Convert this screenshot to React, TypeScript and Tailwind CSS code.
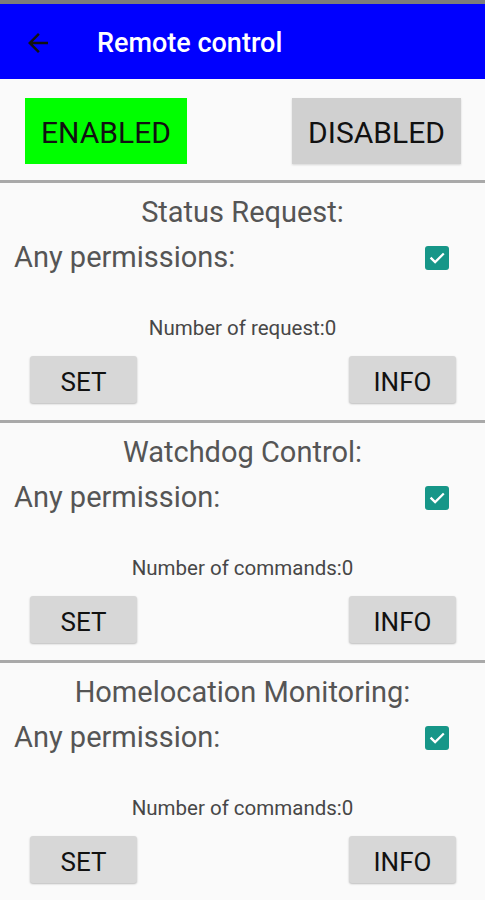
const sections = [
  { title: 'Status Request:', label: 'Any permissions:', count: 'Number of request:0' },
  { title: 'Watchdog Control:', label: 'Any permission:', count: 'Number of commands:0' },
  { title: 'Homelocation Monitoring:', label: 'Any permission:', count: 'Number of commands:0' },
];

const Checkbox = () => (
  <div className="w-[24px] h-[24px] rounded-[3px] bg-[#169688] flex items-center justify-center">
    <svg width="18" height="18" viewBox="0 0 24 24" fill="none">
      <path d="M4.5 12.5l5 5L20 7" stroke="#fff" strokeWidth="3" strokeLinecap="square" />
    </svg>
  </div>
);

const GrayButton = ({ children }: { children: string }) => (
  <button className="w-[107px] h-[47px] rounded-[3px] bg-[#d7d7d7] shadow-[0_1px_2px_rgba(0,0,0,0.25)] text-[26px] text-[#111] leading-[47px] pt-[3px]">
    {children}
  </button>
);

const Section = ({ title, label, count }: { title: string; label: string; count: string }) => (
  <div className="flex flex-col">
    <div className="h-[3px] bg-[#a9a9a9]" />
    <div className="mt-[12px] h-[34px] leading-[34px] text-center text-[29px] text-[#555]">{title}</div>
    <div className="mt-[11px] h-[34px] flex items-center justify-between pl-[14px] pr-[36px]">
      <span className="text-[29px] text-[#555] leading-[34px]">{label}</span>
      <div className="mt-[1px]">
        <Checkbox />
      </div>
    </div>
    <div className="mt-[42px] h-[24px] leading-[24px] text-center text-[20.5px] text-[#474747]">{count}</div>
    <div className="mt-[16px] flex justify-between pl-[30px] pr-[29px]">
      <GrayButton>SET</GrayButton>
      <GrayButton>INFO</GrayButton>
    </div>
    <div className="h-[17px]" />
  </div>
);

const App = () => {
  return (
    <div className="w-[485px] h-[900px] overflow-hidden bg-[#fafafa] font-['Roboto',_'Noto_Sans',_sans-serif]">
      <div className="h-[4px] bg-[#7d7d7d]" />
      <div className="h-[75px] bg-[#0000ff] flex items-center pl-[23px]">
        <svg width="30" height="30" viewBox="0 0 24 24" fill="#111" className="mt-[2px]">
          <path d="M20 11H7.83l5.59-5.59L12 4l-8 8 8 8 1.41-1.41L7.83 13H20v-2z" />
        </svg>
        <span className="ml-[44px] mt-[4px] text-[27px] font-medium text-white">{'Remote control'}</span>
      </div>
      <div className="flex justify-between pl-[25px] pr-[24px] pt-[19px] pb-[16px]">
        <button className="w-[162px] h-[66px] bg-[#00ff00] text-[30px] text-[#111] pt-[3px]">ENABLED</button>
        <button className="w-[169px] h-[66px] bg-[#d0d0d0] text-[30px] text-[#111] pt-[3px] shadow-[0_1px_2px_rgba(0,0,0,0.15)]">
          DISABLED
        </button>
      </div>
      {sections.map((s) => (
        <Section key={s.title} {...s} />
      ))}
    </div>
  );
};

export default App;
